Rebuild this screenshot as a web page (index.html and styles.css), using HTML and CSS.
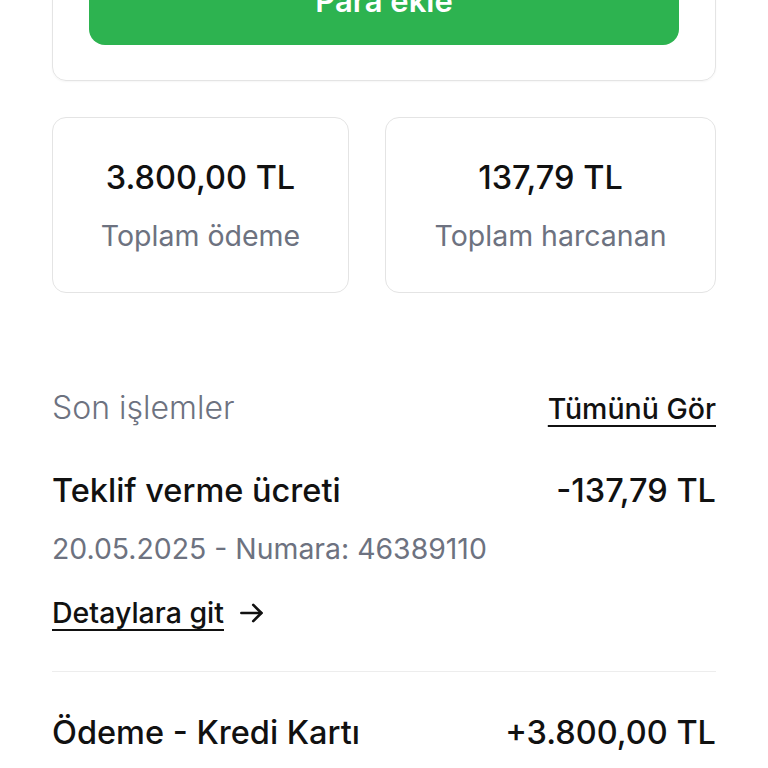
FILE: index.html
```html
<!DOCTYPE html>
<html lang="tr">
<head>
  <meta charset="UTF-8" />
  <meta name="viewport" content="width=device-width, initial-scale=1.0" />
  <title>Cüzdan</title>
  <link rel="stylesheet" href="styles.css">
</head>
<body>
  <div class="page">
    <div class="top-card">
      <button class="btn-add">Para ekle</button>
    </div>

    <div class="stats">
      <div class="stat">
        <div class="stat-value">3.800,00 TL</div>
        <div class="stat-label">Toplam ödeme</div>
      </div>
      <div class="stat">
        <div class="stat-value">137,79 TL</div>
        <div class="stat-label">Toplam harcanan</div>
      </div>
    </div>

    <div class="section-head">
      <span class="section-title">Son işlemler</span>
      <a class="see-all" href="#">Tümünü Gör</a>
    </div>

    <div class="tx">
      <div class="tx-row">
        <span class="tx-title">Teklif verme ücreti</span>
        <span class="tx-amount">-137,79 TL</span>
      </div>
      <div class="tx-meta">20.05.2025 - Numara: 46389110</div>
      <a class="tx-link" href="#">
        <span class="tx-link-text">Detaylara git</span>
        <svg width="30" height="30" viewBox="0 0 24 24" fill="none" stroke="#111" stroke-width="2.1" stroke-linecap="round" stroke-linejoin="round">
          <path d="M3.5 12h16" />
          <path d="M13 5.5l6.5 6.5-6.5 6.5" />
        </svg>
      </a>
    </div>

    <div class="tx tx-last">
      <div class="tx-row">
        <span class="tx-title">Ödeme - Kredi Kartı</span>
        <span class="tx-amount">+3.800,00 TL</span>
      </div>
    </div>
  </div>
</body>
</html>
```

FILE: styles.css
```css
body {
  margin: 0;
  background: #fff;
  font-family: Inter, Roboto, "Liberation Sans", sans-serif;
  color: #111;
}
.page {
  padding: 0 52px;
}
.top-card {
  margin-top: -60px;
  padding: 14px 36px 35px;
  border: 1px solid #e4e4e4;
  border-radius: 14px;
  box-shadow: 0 1px 2px rgba(0, 0, 0, 0.04);
}
.btn-add {
  display: block;
  width: 100%;
  height: 90px;
  border: none;
  border-radius: 16px;
  background-color: #2db350;
  color: #fff;
  font-family: inherit;
  font-size: 31px;
  font-weight: 600;
}
.stats {
  display: grid;
  grid-template-columns: 297px 1fr;
  gap: 36px;
  margin-top: 36px;
}
.stat {
  border: 1px solid #e4e4e4;
  border-radius: 14px;
  padding: 42px 10px 39px;
  text-align: center;
}
.stat-value {
  font-size: 32.5px;
  font-weight: 500;
  line-height: 36px;
}
.stat-label {
  margin-top: 23px;
  font-size: 28.5px;
  line-height: 34px;
  color: #6d7280;
}
.section-head {
  display: flex;
  justify-content: space-between;
  align-items: center;
  margin-top: 97px;
}
.section-title {
  font-size: 32px;
  font-weight: 350;
  line-height: 36px;
  color: #6d7280;
}
.see-all {
  font-size: 28.5px;
  font-weight: 500;
  color: #111;
  text-decoration: underline;
  text-underline-offset: 6px;
  text-decoration-thickness: 2px;
}
.tx {
  padding: 46px 0 41px;
  border-bottom: 1px solid #ededed;
}
.tx-last {
  border-bottom: none;
  padding-top: 42px;
}
.tx-row {
  display: flex;
  justify-content: space-between;
  align-items: center;
  font-size: 32.5px;
  font-weight: 500;
  line-height: 38px;
}
.tx-meta {
  margin-top: 22px;
  font-size: 28.4px;
  line-height: 34px;
  color: #6d7280;
}
.tx-link {
  display: flex;
  align-items: center;
  gap: 13px;
  margin-top: 30px;
  color: #111;
  text-decoration: none;
  font-size: 28.5px;
  font-weight: 500;
  line-height: 34px;
}
.tx-link-text {
  text-decoration: underline;
  text-underline-offset: 6px;
  text-decoration-thickness: 2px;
}
```
